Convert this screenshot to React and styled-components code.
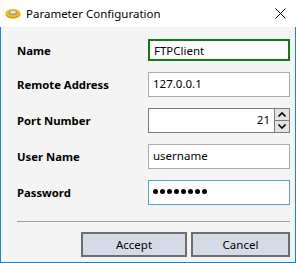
import React from "react";
import styled, { createGlobalStyle } from "styled-components";

const GlobalStyle = createGlobalStyle`
    html, body {
        margin: 0;
        padding: 0;
        background: #ffffff;
    }
    body {
        font-family: "Noto Sans", "Open Sans", sans-serif;
        font-size: 11.3px;
        color: #000;
    }
`;

const Window = styled.div`
    width: 296px;
    height: 263px;
    display: flex;
    flex-direction: column;
    box-sizing: border-box;
`;

const TitleBar = styled.div`
    height: 27px;
    display: flex;
    align-items: center;
    background: #ffffff;
    padding: 0 10px 0 5px;
    flex-shrink: 0;
`;

const TitleText = styled.span`
    margin-left: 5px;
    font-size: 11.5px;
    flex: 1;
    white-space: nowrap;
`;

const Body = styled.div`
    flex: 1;
    background: #f4f4f4;
    border: 1px solid #1883d7;
    border-top: none;
    padding: 12px 5px 0 16px;
    display: flex;
    flex-direction: column;
`;

const Form = styled.div`
    display: flex;
    flex-direction: column;
    gap: 11px;
`;

const Row = styled.div`
    display: grid;
    grid-template-columns: 131px 1fr;
    align-items: center;
    height: ${({ $h }) => $h}px;
`;

const Label = styled.label`
    font-weight: 700;
    font-size: 11.3px;
`;

const borders = {
    focus: "2px solid #107c10",
    normal: "1px solid #acacac",
    dark: "1px solid #7a7a7a",
    active: "1px solid #569de5",
};

const Field = styled.div`
    height: 100%;
    box-sizing: border-box;
    background: #fff;
    border: ${({ $kind }) => borders[$kind]};
    display: flex;
    align-items: ${({ $kind }) => ($kind === "focus" ? "center" : "flex-start")};
    padding: ${({ $kind }) => ($kind === "focus" ? "0 4px" : "3px 4px")};
    font-size: 11.5px;
    white-space: nowrap;
`;

const Spin = styled.div`
    height: 100%;
    box-sizing: border-box;
    background: #fff;
    border: 1px solid #7a7a7a;
    display: flex;
`;

const SpinValue = styled.div`
    flex: 1;
    text-align: right;
    padding: 3px 4px 0 0;
    font-size: 11.5px;
`;

const SpinButtons = styled.div`
    width: 14px;
    display: flex;
    flex-direction: column;
    border-left: 1px solid #7a7a7a;
`;

const SpinBtn = styled.div`
    flex: 1;
    background: #e3e3e3;
    display: flex;
    align-items: center;
    justify-content: center;
    & + & {
        border-top: 1px solid #7a7a7a;
    }
`;

const Dots = styled.div`
    display: flex;
    gap: 2px;
    padding: 5px 0 0 0;
`;

const Dot = styled.span`
    width: 5px;
    height: 5px;
    border-radius: 50%;
    background: #000;
`;

const Separator = styled.div`
    height: 1px;
    background: #a0a0a0;
    margin-top: 16px;
`;

const ButtonBar = styled.div`
    display: flex;
    justify-content: flex-end;
    gap: 4px;
    margin-top: 10px;
`;

const Button = styled.button`
    width: ${({ $w }) => $w}px;
    height: 25px;
    background: #d5dae7;
    border: 2px solid #6d6d6d;
    font-family: inherit;
    font-size: 11.5px;
    color: #000;
    padding: 0;
`;

const AppIcon = () => (
    <svg width="16" height="11" viewBox="0 0 16 11">
        <ellipse cx="8" cy="6.5" rx="7.5" ry="4" fill="#d59a00" />
        <ellipse cx="8" cy="5" rx="7.5" ry="4" fill="#f5c400" />
        <ellipse cx="8" cy="4.8" rx="4.5" ry="2.3" fill="#9a9a9a" />
        <ellipse cx="8" cy="4.3" rx="3" ry="1.4" fill="#e6e6e6" />
    </svg>
);

const CloseIcon = () => (
    <svg width="11" height="11" viewBox="0 0 11 11">
        <path d="M0.5 0.5 L10.5 10.5 M10.5 0.5 L0.5 10.5" stroke="#000" strokeWidth="1" />
    </svg>
);

const Arrow = ({ up }) => (
    <svg width="8" height="5" viewBox="0 0 8 5">
        <path d={up ? "M0.5 4.5 L4 1 L7.5 4.5" : "M0.5 0.5 L4 4 L7.5 0.5"} stroke="#000" strokeWidth="1.6" fill="none" />
    </svg>
);

export default function App() {
    return (
        <>
            <GlobalStyle />
            <Window>
                <TitleBar>
                    <AppIcon />
                    <TitleText>Parameter Configuration</TitleText>
                    <CloseIcon />
                </TitleBar>
                <Body>
                    <Form>
                        <Row $h={22}>
                            <Label>Name</Label>
                            <Field $kind="focus">FTPClient</Field>
                        </Row>
                        <Row $h={25}>
                            <Label>Remote Address</Label>
                            <Field $kind="normal">127.0.0.1</Field>
                        </Row>
                        <Row $h={25}>
                            <Label>Port Number</Label>
                            <Spin>
                                <SpinValue>21</SpinValue>
                                <SpinButtons>
                                    <SpinBtn><Arrow up /></SpinBtn>
                                    <SpinBtn><Arrow /></SpinBtn>
                                </SpinButtons>
                            </Spin>
                        </Row>
                        <Row $h={25}>
                            <Label>User Name</Label>
                            <Field $kind="normal">username</Field>
                        </Row>
                        <Row $h={25}>
                            <Label>Password</Label>
                            <Field $kind="active">
                                <Dots>
                                    {Array.from({ length: 8 }).map((_, i) => (
                                        <Dot key={i} />
                                    ))}
                                </Dots>
                            </Field>
                        </Row>
                    </Form>
                    <Separator />
                    <ButtonBar>
                        <Button $w={106}>Accept</Button>
                        <Button $w={99}>Cancel</Button>
                    </ButtonBar>
                </Body>
            </Window>
        </>
    );
}
